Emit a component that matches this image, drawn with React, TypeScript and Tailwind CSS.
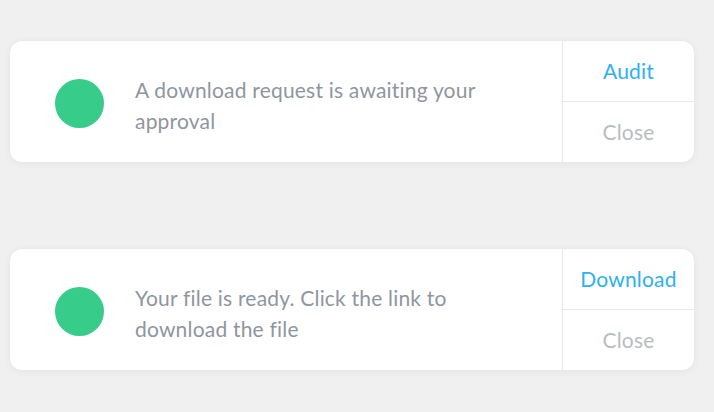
export default function App() {
  const items = [
    { text: 'A download request is awaiting your approval', action: 'Audit' },
    { text: 'Your file is ready. Click the link to download the file', action: 'Download' },
  ]
  return (
    <div className="min-h-[412px] bg-[#f0f0f0] px-[10px] pt-[41px] flex flex-col gap-[87px]" style={{ fontFamily: 'Lato, sans-serif' }}>
      {items.map((it) => (
        <div key={it.action} className="flex h-[121px] w-[684px] rounded-[12px] bg-white shadow-[0_1px_8px_rgba(0,0,0,0.06)]">
          <div className="flex flex-1 items-center pl-[45px] pr-[30px]">
            <div className="mt-[4px] h-[49px] w-[49px] shrink-0 rounded-full bg-[#38cc8a]" />
            <p className="ml-[31px] w-[350px] pt-[6px] text-[21px] leading-[31px] tracking-[0.2px] text-[#8e969e]">{it.text}</p>
          </div>
          <div className="flex w-[132px] flex-col border-l border-[#e6e6e6]">
            <button className="flex flex-1 items-center justify-center border-b border-[#e6e6e6] text-[21px] tracking-[0.2px] text-[#2eb0f5]">{it.action}</button>
            <button className="flex flex-1 items-center justify-center text-[21px] tracking-[0.2px] text-[#b9bdc1]">Close</button>
          </div>
        </div>
      ))}
    </div>
  )
}
